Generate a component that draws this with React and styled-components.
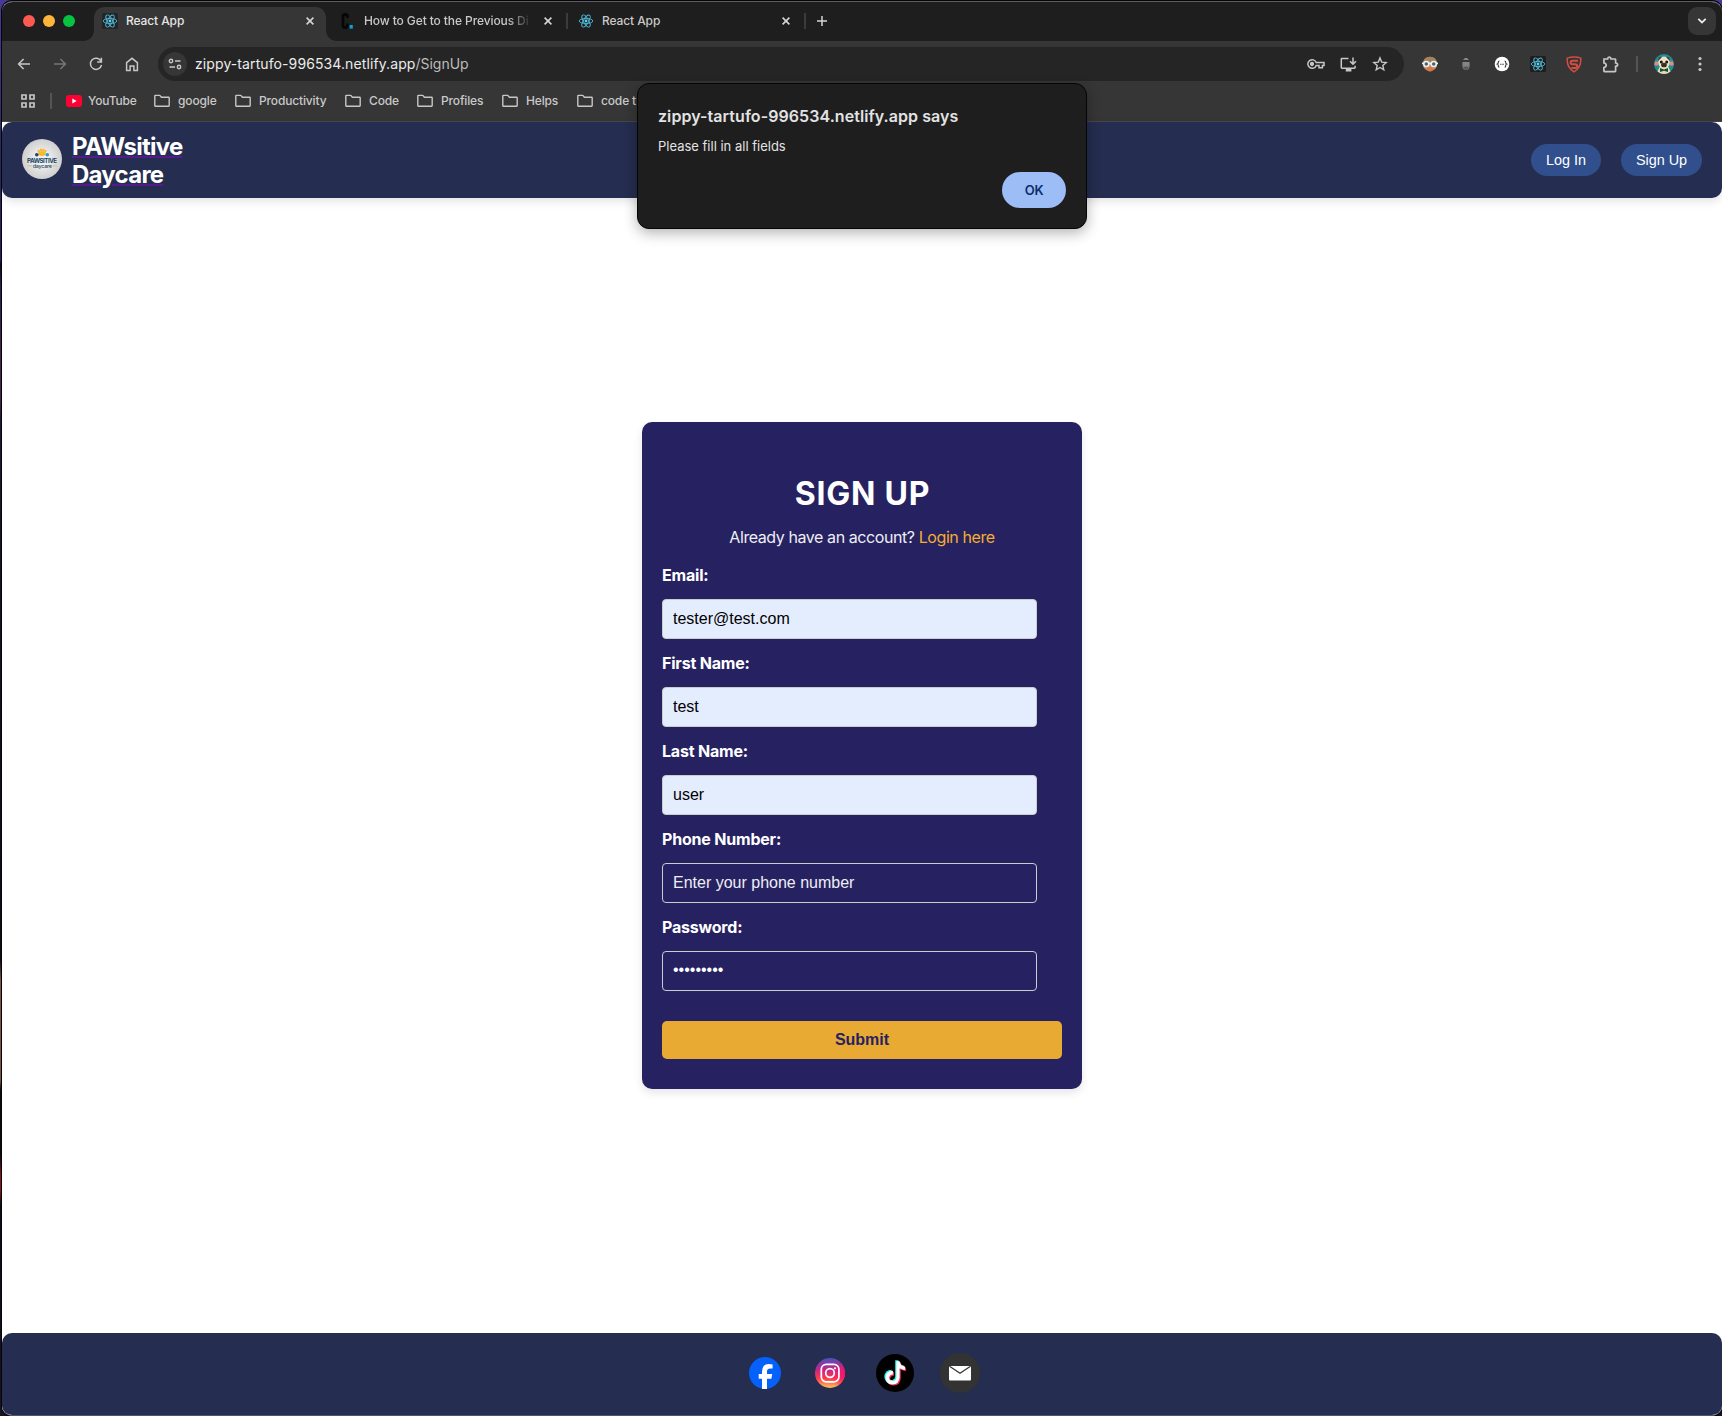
import React from "react";
import styled, { createGlobalStyle } from "styled-components";

const ui = `Inter, "Liberation Sans", sans-serif`;
const arial = `"Liberation Sans", Arial, sans-serif`;

const Global = createGlobalStyle`
  *, *::before, *::after { box-sizing: border-box; }
  body { margin: 0; background: #0c0a18; font-family: ${ui}; overflow: hidden; }
`;

const Desktop = styled.div`
  width: 1722px;
  height: 1416px;
  padding: 1px 0 0 2px;
  background: linear-gradient(#4a3a94 0, #40348c 60px, #2b2960 150px, #232060 260px, #0c0a18 264px, #272250 285px,
    #24225a 300px, #4a2148 350px, #4a2148 400px, #1c1a3c 420px, #17131f 560px, #100c14 960px, #7d563c 980px, #7d563c 1080px, #0a0a10 1090px,
    #0a0a10 1155px, #8c1414 1175px, #8c1414 1190px, #0d0c14 1205px, #16141c 1416px);
`;

const Window = styled.div`
  display: flex;
  flex-direction: column;
  height: 1415px;
  border-top: 1px solid #5d5c60;
  border-bottom: 1px solid #4d5478;
  border-radius: 10px;
  overflow: hidden;
  background: #fff;
  box-shadow: 0 0 0 1px #050408;
`;

const TabStrip = styled.div`
  display: flex;
  height: 39px;
  padding: 5px 6px 0 21px;
  background: #1e1e1e;
`;

const Lights = styled.div`
  display: flex;
  gap: 8px;
  padding-top: 8px;
  width: 71px;
`;

const Light = styled.span`
  width: 12px;
  height: 12px;
  border-radius: 50%;
  background: ${(p) => p.$color};
`;

const Tab = styled.div`
  position: relative;
  display: flex;
  align-items: center;
  width: ${(p) => p.$width}px;
  height: 34px;
  padding: 0 ${(p) => (p.$active ? 9 : 11)}px 6px 8px;
  font-size: 12px;
  font-weight: 500;
  color: ${(p) => (p.$active ? "#e6e6e6" : "#c9c9c9")};
  background: ${(p) => (p.$active ? "#363636" : "transparent")};
  border-radius: 10px 10px 0 0;
  ${(p) =>
    p.$active &&
    `
    &::before, &::after {
      content: "";
      position: absolute;
      bottom: 0;
      width: 10px;
      height: 10px;
    }
    &::before { left: -10px; background: radial-gradient(circle at 0 0, transparent 9.5px, #363636 10px); }
    &::after { right: -10px; background: radial-gradient(circle at 100% 0, transparent 9.5px, #363636 10px); }
  `}
`;

const TabTitle = styled.span`
  flex: 1;
  margin: 0 ${(p) => (p.$fade ? 8 : 12)}px 0 8px;
  padding-bottom: 2px;
  white-space: nowrap;
  letter-spacing: -0.1px;
  ${(p) => p.$fade && `mask-image: linear-gradient(90deg, #000 calc(100% - 26px), transparent calc(100% - 1px));`}
`;

const TabDivider = styled.span`
  width: 2px;
  height: 16px;
  margin-top: 6px;
  background: #3b3b3b;
`;

const NewTab = styled.div`
  padding: 8px 0 0 10px;
  line-height: 0;
`;

const TabSearch = styled.div`
  display: flex;
  align-items: center;
  justify-content: center;
  width: 28px;
  height: 28px;
  margin-left: auto;
  border-radius: 9px;
  background: #363636;
`;

const Toolbar = styled.div`
  display: flex;
  align-items: center;
  height: 46px;
  padding: 0 4px 0 12px;
  background: #363636;
`;

const IconSlot = styled.span`
  display: flex;
  align-items: center;
  justify-content: center;
  width: ${(p) => p.$w || 36}px;
  flex: none;
`;

const NavIcons = styled.div`
  display: flex;
  flex: none;
  width: 144px;
  margin-left: -8px;
`;

const Omnibox = styled.div`
  display: flex;
  flex: none;
  align-items: center;
  width: 1246px;
  height: 34px;
  margin-left: 8px;
  padding: 0 8px 0 5px;
  border-radius: 17px;
  background: #252525;
`;

const SiteChip = styled.span`
  display: flex;
  align-items: center;
  justify-content: center;
  width: 24px;
  height: 24px;
  border-radius: 50%;
  background: #363636;
`;

const Url = styled.span`
  flex: 1;
  margin-left: 8px;
  padding-bottom: 2px;
  font-size: 14px;
  letter-spacing: -0.03px;
  color: #bcbcbc;
  b { font-weight: 400; letter-spacing: 0.1px; color: #ececec; }
`;

const Extensions = styled.div`
  display: flex;
  align-items: center;
  margin-left: 8px;
`;

const Bar = styled.span`
  width: 2px;
  height: 16px;
  background: #555;
`;

const Bookmarks = styled.div`
  display: flex;
  align-items: center;
  height: 35px;
  padding: 0 0 7px 18px;
  border-bottom: 1px solid #474747;
  background: #363636;
  color: #c9c9c9;
  font-size: 12px;
  font-weight: 500;
`;

const BookmarkDivider = styled(Bar)`
  margin: 0 14px;
`;

const Bookmark = styled.span`
  display: flex;
  align-items: center;
  gap: ${(p) => p.$gap || 8}px;
  width: ${(p) => p.$width}px;
  flex: none;
  white-space: nowrap;
  letter-spacing: -0.15px;
`;

const Page = styled.div`
  display: flex;
  flex-direction: column;
  flex: 1;
  background: #fff;
`;

const Header = styled.header`
  display: flex;
  align-items: center;
  justify-content: space-between;
  height: 76px;
  padding: 0 20px;
  border-radius: 10px;
  background: #252d50;
  box-shadow: 0 4px 8px rgba(0, 0, 0, 0.1);
`;

const Brand = styled.a`
  display: flex;
  align-items: center;
  gap: 10px;
  padding-bottom: 2px;
`;

const BrandName = styled.span`
  width: 130px;
  padding-top: 4px;
  font-size: 24px;
  font-weight: 700;
  line-height: 28px;
  letter-spacing: -0.75px;
  color: #fff;
  text-decoration-line: underline;
  text-decoration-color: #551a8b;
  text-decoration-thickness: 1.5px;
  text-underline-offset: 1px;
`;

const NavButtons = styled.nav`
  display: flex;
  gap: 20px;
`;

const NavButton = styled.button`
  height: 32px;
  width: ${(p) => p.$width}px;
  padding: 0;
  border: 0;
  border-radius: 20px;
  background: #304f8c;
  color: #fff;
  font: 14.4px ${arial};
`;

const Main = styled.main`
  display: flex;
  align-items: flex-start;
  justify-content: center;
  flex: 1;
  padding-top: 224px;
`;

const Card = styled.form`
  width: 440px;
  height: 667px;
  padding: 50px 20px 30px;
  border-radius: 10px;
  background: #262262;
  color: #fff;
  box-shadow: 0 4px 8px rgba(0, 0, 0, 0.1);
`;

const Title = styled.h2`
  margin: 0;
  padding-left: 1px;
  font-size: 32px;
  font-weight: 700;
  line-height: 44px;
  letter-spacing: 0.8px;
  text-align: center;
`;

const Prompt = styled.p`
  margin: 9px 0 0;
  font-size: 16px;
  line-height: 24px;
  letter-spacing: -0.42px;
  text-align: center;
  color: #eeeef4;
  a { color: #f5ae2e; }
`;

const Field = styled.label`
  display: block;
  height: 88px;
`;

const Fields = styled.div`
  padding-top: 14px;
`;

const FieldName = styled.span`
  display: block;
  height: 36px;
  font-size: 16px;
  font-weight: 700;
  line-height: 24px;
  letter-spacing: -0.2px;
`;

const Input = styled.input`
  display: block;
  width: 375px;
  height: 40px;
  padding: 0 10px;
  border: 1px solid #ccc;
  border-radius: 4px;
  outline: 0;
  background: ${(p) => (p.$filled ? "#e4edfe" : "transparent")};
  color: ${(p) => (p.$filled ? "#000" : "#fff")};
  font: 16px ${arial};
  &::placeholder { color: #eeeef4; opacity: 1; }
`;

const PasswordInput = styled(Input)`
  padding-bottom: 2px;
`;

const Submit = styled.button`
  display: block;
  width: 400px;
  height: 38px;
  margin-top: 18px;
  padding: 0;
  border: 0;
  border-radius: 5px;
  background: #e9aa33;
  color: #262262;
  font: bold 16px ${arial};
`;

const Footer = styled.footer`
  display: flex;
  align-items: center;
  height: 82px;
  padding: 0 0 2px 730px;
  border-radius: 10px 10px 0 0;
  background: #252d50;
`;

const Dialog = styled.div`
  position: absolute;
  left: 637px;
  top: 83px;
  width: 450px;
  height: 146px;
  padding: 20px 20px 20px;
  display: flex;
  flex-direction: column;
  border-radius: 12px;
  border: 1px solid #050505;
  background: #1e1e1e;
  color: #e3e3e3;
  box-shadow: 0 4px 14px rgba(0, 0, 0, 0.3);
`;

const DialogTitle = styled.div`
  font-size: 16px;
  font-weight: 600;
  line-height: 24px;
  letter-spacing: 0.07px;
`;

const DialogText = styled.div`
  margin-top: 8px;
  font-size: 13px;
  line-height: 20px;
`;

const OkButton = styled.button`
  width: 64px;
  height: 36px;
  margin: auto 0 0 auto;
  border: 0;
  border-radius: 18px;
  background: #9cbdf6;
  color: #0b2f6b;
  font: 600 13px ${ui};
  letter-spacing: -0.3px;
`;

const CloseIcon = () => (
  <svg width="8" height="8" viewBox="0 0 8 8" stroke="#d5d5d5" strokeWidth="1.6">
    <path d="M.6.6l6.8 6.8M7.4.6L.6 7.4" />
  </svg>
);

const ReactIcon = ({ size = 16, bg = "#222428" }) => (
  <svg width={size} height={size} viewBox="0 0 16 16" fill="none" stroke="#4fb8d5" strokeWidth=".9">
    <rect width="16" height="16" rx="1.5" fill={bg} stroke="none" />
    <ellipse cx="8" cy="8" rx="6.8" ry="2.6" />
    <ellipse cx="8" cy="8" rx="6.8" ry="2.6" transform="rotate(60 8 8)" />
    <ellipse cx="8" cy="8" rx="6.8" ry="2.6" transform="rotate(120 8 8)" />
    <circle cx="8" cy="8" r="1.4" fill="#5ed3f3" stroke="none" />
  </svg>
);

const CareerIcon = () => (
  <svg width="16" height="16" viewBox="0 0 16 16">
    <path d="M7.4 5V3.2Q7.4 1.4 5.2 1.4T3 3.2v9.6q0 1.8 2.2 1.8t2.2-1.8V10.6" fill="none" stroke="#060606" strokeWidth="2.8" />
    <rect x="9.6" y="12" width="3.2" height="3.6" fill="#0aa2dc" />
  </svg>
);

const Folder = () => (
  <svg width="16" height="14" viewBox="0 0 16 14" fill="none" stroke="#c7c7c7" strokeWidth="1.4" strokeLinejoin="round">
    <path d="M.8 11.6V2q0-.6.6-.6h4.4l1.6 1.9h7.2q.6 0 .6.6v7.7q0 .7-.6.7H1.4q-.6 0-.6-.7z" />
  </svg>
);

const folders = [
  ["google", 81],
  ["Productivity", 110],
  ["Code", 72],
  ["Profiles", 85],
  ["Helps", 75],
  ["code t", 60],
];

const fields = [
  { label: "Email:", value: "tester@test.com", filled: true },
  { label: "First Name:", value: "test", filled: true },
  { label: "Last Name:", value: "user", filled: true },
  { label: "Phone Number:", value: "", placeholder: "Enter your phone number" },
  { label: "Password:", value: "•••••••••", secret: true },
];

function BrowserTabs() {
  return (
    <TabStrip>
      <Lights>
        <Light $color="#ff5a52" />
        <Light $color="#ffb43a" />
        <Light $color="#06c340" />
      </Lights>
      <Tab $width={232} $active>
        <ReactIcon />
        <TabTitle>React App</TabTitle>
        <IconSlot $w={14}><CloseIcon /></IconSlot>
      </Tab>
      <Tab $width={240}>
        <IconSlot $w={6} />
        <CareerIcon />
        <TabTitle $fade>How to Get to the Previous Di</TabTitle>
        <IconSlot $w={14}><CloseIcon /></IconSlot>
      </Tab>
      <TabDivider />
      <Tab $width={236}>
        <IconSlot $w={2} />
        <ReactIcon bg="none" />
        <TabTitle>React App</TabTitle>
        <IconSlot $w={14}><CloseIcon /></IconSlot>
      </Tab>
      <TabDivider />
      <NewTab>
        <svg width="12" height="12" viewBox="0 0 12 12" stroke="#d5d5d5" strokeWidth="1.5"><path d="M6 1v10M1 6h10" /></svg>
      </NewTab>
      <TabSearch>
        <svg width="10" height="6" viewBox="0 0 10 6" fill="none" stroke="#e6e6e6" strokeWidth="1.8"><path d="M1.3.8L5 4.5 8.7.8" /></svg>
      </TabSearch>
    </TabStrip>
  );
}

function BrowserToolbar() {
  const line = { fill: "none", stroke: "#c7c7c7", strokeWidth: 1.5 };
  return (
    <Toolbar>
      <NavIcons>
        <IconSlot>
          <svg width="14" height="12" viewBox="0 0 14 12" {...line}><path d="M13 6H1.6M6.6 1L1.6 6l5 5" /></svg>
        </IconSlot>
        <IconSlot>
          <svg width="14" height="12" viewBox="0 0 14 12" {...line} stroke="#757575"><path d="M1 6h11.4M7.4 1l5 5-5 5" /></svg>
        </IconSlot>
        <IconSlot>
          <svg width="14" height="14" viewBox="0 0 14 14" {...line}><path d="M12 4.2A5.6 5.6 0 1 0 12.5 8M12.4.8v4.2H8.2" /></svg>
        </IconSlot>
        <IconSlot>
          <svg width="14" height="15" viewBox="0 0 14 15" {...line}><path d="M1.6 5.6L7 1.3l5.4 4.3v8H8.9V9H5.1v4.6H1.6z" /></svg>
        </IconSlot>
      </NavIcons>
      <Omnibox>
        <SiteChip>
          <svg width="14" height="12" viewBox="0 0 14 12" {...line} strokeWidth="1.4">
            <circle cx="3" cy="3" r="1.7" /><path d="M7 3h5.5M1.5 9H7" /><circle cx="11" cy="9" r="1.7" />
          </svg>
        </SiteChip>
        <Url><b>zippy-tartufo-996534.netlify.app</b>/SignUp</Url>
        <IconSlot $w={32}>
          <svg width="18" height="12" viewBox="0 0 18 12" {...line}>
            <path d="M9.2 4.6A4.3 4.3 0 1 0 9.2 7.4H12v2.4h3.4V7.4H17V4.6z" /><circle cx="5" cy="6" r="1.4" fill="#c7c7c7" />
          </svg>
        </IconSlot>
        <IconSlot $w={32}>
          <svg width="17" height="15" viewBox="0 0 17 15" {...line}>
            <path d="M8.5 1.4H1.9q-.6 0-.6.6v8.6q0 .6.6.6h12.6q.6 0 .6-.6V8.8" /><path d="M5.8 13.2h5.6" strokeWidth="2.6" /><path d="M13 .4v6.4M10 4.2l3 3 3-3" />
          </svg>
        </IconSlot>
        <IconSlot $w={32}>
          <svg width="16" height="16" viewBox="0 0 16 16" {...line} strokeWidth="1.4">
            <path d="M8 1.9l1.7 4.2 4.5.4-3.4 2.9 1 4.4L8 11.5l-3.8 2.3 1-4.4L1.8 6.5l4.5-.4z" />
          </svg>
        </IconSlot>
      </Omnibox>
      <Extensions>
        <IconSlot>
          <svg width="16" height="16" viewBox="0 0 16 16">
            <circle cx="8" cy="8" r="7.2" fill="#c98b62" /><path d="M1 7Q1.6.8 8 .8T15 7z" fill="#a58259" /><path d="M4 11q4 1 8 0-1 4.5-4 4.5T4 11z" fill="#d97744" />
            <path d="M0 6.6h16v1.6H0z" fill="#e8eef0" />
            <circle cx="4.3" cy="8" r="2.5" fill="#49636d" stroke="#e8f3f5" strokeWidth="1.5" /><circle cx="11.7" cy="8" r="2.5" fill="#49636d" stroke="#e8f3f5" strokeWidth="1.5" />
          </svg>
        </IconSlot>
        <IconSlot>
          <svg width="10" height="14" viewBox="0 0 10 14"><path d="M2 2.8Q5-.6 8 2.8z" fill="#a0a0a0" /><path d="M1.4 5h7.2v4.500Q8 13 5 13T1.400 9.500z" fill="#858585" /><path d="M2 9.5h6Q7 13 5 13T2 9.5z" fill="#5a5a5a" /></svg>
        </IconSlot>
        <IconSlot>
          <svg width="16" height="16" viewBox="0 0 16 16" fill="none" stroke="#333" strokeWidth="1.1">
            <circle cx="8" cy="8" r="7.3" fill="#fff" stroke="none" />
            <path d="M5.4 5q-1.1 0-1.1 1.3T3.4 8q.9.2.9 1.700T5.400 11M10.600 5q1.100 0 1.100 1.300T12.600 8q-.9.2-.9 1.700t-1.100 1.300" /><path d="M6.200 8.200h3.800" strokeDasharray="1 .5" />
          </svg>
        </IconSlot>
        <IconSlot><ReactIcon bg="#1e1e1e" /></IconSlot>
        <IconSlot>
          <svg width="16" height="17" viewBox="0 0 16 17" fill="none" stroke="#d64c3e">
            <path d="M8 1q4 0 6.800 1.100.6 9.600-6.800 13.700Q.6 11.700 1.200 2.100 4 1 8 1z" strokeWidth="1.5" />
            <path d="M12 4.700H6.700Q4.600 4.700 4.600 6.400T6.700 8.200H9.300Q11.200 8.300 11.200 10T9 12H5.400" strokeWidth="2" />
          </svg>
        </IconSlot>
        <IconSlot>
          <svg width="17" height="17" viewBox="0 0 17 17" {...line} strokeWidth="1.7">
            <path d="M2 3h3.600q.1-1.800 1.700-1.800T9 3h4q.6 0 .6.600V7q2 .1 2 1.700t-2 1.700V15q0 .6-.6.600H2.500q-.6 0-.6-.6v-3.500q2.300-.4 2.300-2.300T1.900 6.800z" />
          </svg>
        </IconSlot>
        <IconSlot $w={18}><Bar /></IconSlot>
        <IconSlot>
          <svg width="20" height="20" viewBox="0 0 20 20">
            <circle cx="10" cy="10" r="10" fill="#1d8d98" />
            <path d="M.8 7.500h3.400v4H.4zM15.800 7.500h3.400l.4 4h-3.800z" fill="#e58a79" />
            <path d="M5.500 13h9l2 4.500Q13.500 20 10 20t-6.500-2.500z" fill="#ead9b9" />
            <ellipse cx="10" cy="8.500" rx="5.800" ry="6" fill="#efe0c4" />
            <path d="M4 7l.8-4L8 3.300zM16 7l-.8-4L12 3.300z" fill="#4a3c35" />
            <ellipse cx="7.300" cy="8" rx="1.500" ry="1.600" fill="#1c1613" /><ellipse cx="12.700" cy="8" rx="1.500" ry="1.600" fill="#1c1613" />
            <ellipse cx="10" cy="11" rx="2.900" ry="2.300" fill="#3a2d27" />
            <path d="M6 14l4 1.500 4-1.500v4l-4-1.300L6 18z" fill="#155329" />
          </svg>
        </IconSlot>
        <IconSlot>
          <svg width="4" height="16" viewBox="0 0 4 16" fill="#c7c7c7"><circle cx="2" cy="2.5" r="1.6" /><circle cx="2" cy="8" r="1.6" /><circle cx="2" cy="13.5" r="1.6" /></svg>
        </IconSlot>
      </Extensions>
    </Toolbar>
  );
}

function BookmarkBar() {
  return (
    <Bookmarks>
      <svg width="16" height="16" viewBox="0 0 16 16" fill="none" stroke="#c7c7c7" strokeWidth="1.7">
        <path d="M2 2h4v4H2zM10 2h4v4h-4zM2 10h4v4H2zM10 10h4v4h-4z" />
      </svg>
      <BookmarkDivider />
      <Bookmark $width={88} $gap={6}>
        <svg width="16" height="12" viewBox="0 0 16 12"><rect width="16" height="12" rx="3" fill="#ff0033" /><path d="M6.3 3.5L10.7 6l-4.4 2.5z" fill="#fff" /></svg>
        YouTube
      </Bookmark>
      {folders.map(([name, width]) => (
        <Bookmark key={name} $width={width}><Folder />{name}</Bookmark>
      ))}
    </Bookmarks>
  );
}

function BrandLogo() {
  return (
    <svg width="40" height="40" viewBox="0 0 40 40">
      <defs><radialGradient id="logoFill"><stop offset=".3" stopColor="#efefef" /><stop offset="1" stopColor="#cfcfcf" /></radialGradient></defs>
      <circle cx="20" cy="20" r="20" fill="url(#logoFill)" />
      <g fill="#f6b92e"><ellipse cx="20" cy="14.5" rx="3.8" ry="2.4" /><circle cx="16.7" cy="12" r="1.2" /><circle cx="18.9" cy="10.9" r="1.2" /><circle cx="21.3" cy="10.9" r="1.2" /><circle cx="23.4" cy="12" r="1.2" /></g>
      <circle cx="14.8" cy="15.7" r="1.8" fill="#20466b" /><circle cx="25.3" cy="15.7" r="1.8" fill="#2a9fd0" />
      <text x="20" y="24.3" textAnchor="middle" fontFamily="Inter, sans-serif" fontWeight="700" fontSize="6.2" textLength="30" fill="#174667">PAWSITIVE</text>
      <text x="20.3" y="29" textAnchor="middle" fontFamily="Inter, sans-serif" fontWeight="500" fontSize="5.4" textLength="19" fill="#174667">daycare</text>
      <path d="M5.5 26.8h4.500M30.500 26.800H35" stroke="#e5b650" strokeWidth=".8" />
    </svg>
  );
}

function SocialLinks() {
  const note = "M19.500 6.500h3.200q.6 4.800 5.400 5.400v3.400q-3 0-5.400-1.700v9.300q-.4 6.800-7.200 7-6.600-.5-6.900-7 .5-6.500 7.400-6.800v3.600q-3.500.3-3.800 3.300.3 3 3.500 3.300 3.400-.2 3.800-3.600z";
  return (
    <>
      <IconSlot $w={65}>
        <svg width="32" height="32" viewBox="0 0 32 32">
          <circle cx="16" cy="16" r="16" fill="#0561fb" />
          <path d="M13 32V21.700H9.700v-4.600H13v-2.400q0-7.600 6.600-7.600 2 0 4 .4v4.100h-2.300q-3.300 0-3.300 3v2.500h5.200l-.8 4.600h-4.400V32z" fill="#fff" />
        </svg>
      </IconSlot>
      <IconSlot $w={65}>
        <svg width="30" height="30" viewBox="0 0 30 30" fill="none" stroke="#fff" strokeWidth="1.7">
          <defs>
            <linearGradient id="igBase" x1=".4" y1="0" x2=".4" y2="1"><stop offset="0" stopColor="#4a50b8" /><stop offset=".38" stopColor="#c4258c" /><stop offset=".68" stopColor="#fb3b4b" /><stop offset="1" stopColor="#fbc55c" /></linearGradient>
            <radialGradient id="igEdge" cx="1" cy=".55" r=".5"><stop offset="0" stopColor="#f9116d" /><stop offset="1" stopColor="#f9116d" stopOpacity="0" /></radialGradient>
          </defs>
          <circle cx="15" cy="15" r="15" fill="url(#igBase)" stroke="none" /><circle cx="15" cy="15" r="15" fill="url(#igEdge)" stroke="none" />
          <rect x="6.3" y="6.3" width="17.6" height="17.6" rx="5" /><circle cx="15" cy="15" r="4.3" /><circle cx="20" cy="10.3" r="1.1" fill="#fff" stroke="none" />
        </svg>
      </IconSlot>
      <IconSlot $w={65}>
        <svg width="38" height="38" viewBox="0 0 38 38">
          <circle cx="19" cy="19" r="19" fill="#000" />
          <path d={note} fill="#25f4ee" transform="translate(-.3 -.3)" /><path d={note} fill="#fe2c55" transform="translate(2 1.700)" /><path d={note} fill="#fff" transform="translate(.9 .7)" />
        </svg>
      </IconSlot>
      <IconSlot $w={65}>
        <svg width="40" height="40" viewBox="0 0 40 40">
          <circle cx="20" cy="20" r="20" fill="#333" /><rect x="9" y="13" width="22" height="14.5" rx="1" fill="#fff" />
          <path d="M9.5 13.3L20 20.300l10.500-7" fill="none" stroke="#333" strokeWidth="1.3" />
        </svg>
      </IconSlot>
    </>
  );
}

export default function App() {
  return (
    <Desktop>
      <Global />
      <Window>
        <BrowserTabs />
        <BrowserToolbar />
        <BookmarkBar />
        <Page>
          <Header>
            <Brand>
              <BrandLogo />
              <BrandName>PAWsitive Daycare</BrandName>
            </Brand>
            <NavButtons>
              <NavButton $width={70}>Log In</NavButton>
              <NavButton $width={81}>Sign Up</NavButton>
            </NavButtons>
          </Header>
          <Main>
            <Card>
              <Title>SIGN UP</Title>
              <Prompt>Already have an account? <a>Login here</a></Prompt>
              <Fields>
                {fields.map((f) => (
                  <Field key={f.label}>
                    <FieldName>{f.label}</FieldName>
                    {f.secret ? (
                      <PasswordInput readOnly value={f.value} />
                    ) : (
                      <Input readOnly $filled={f.filled} value={f.value} placeholder={f.placeholder} />
                    )}
                  </Field>
                ))}
              </Fields>
              <Submit type="button">Submit</Submit>
            </Card>
          </Main>
          <Footer><SocialLinks /></Footer>
        </Page>
      </Window>
      <Dialog>
        <DialogTitle>zippy-tartufo-996534.netlify.app says</DialogTitle>
        <DialogText>Please fill in all fields</DialogText>
        <OkButton>OK</OkButton>
      </Dialog>
    </Desktop>
  );
}
